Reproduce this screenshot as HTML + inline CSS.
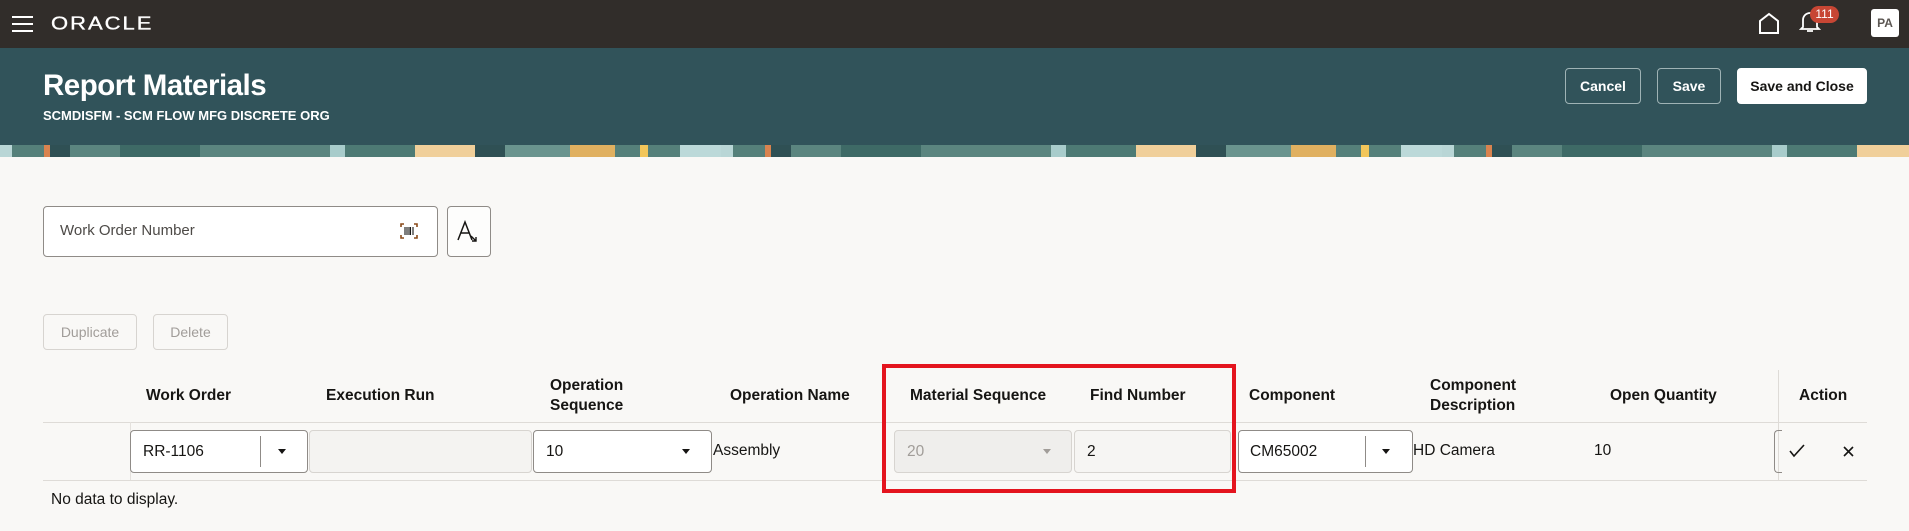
<!DOCTYPE html>
<html><head><meta charset="utf-8"><style>
*{margin:0;padding:0;box-sizing:border-box}
body{width:1909px;height:531px;overflow:hidden;background:#f9f8f6;font-family:"Liberation Sans",sans-serif;position:relative;color:#161513}
.a{position:absolute}
.top{left:0;top:0;width:1909px;height:48px;background:#312d2a}
.hdr{left:0;top:48px;width:1909px;height:97px;background:#31535a}
.band{left:0;top:145px;width:1909px;height:12px;background:repeating-linear-gradient(90deg,#b9d6d6 0 12px,#55807a 12px 44px,#d9834f 44px 50px,#2f5054 50px 70px,#5b857f 70px 120px,#3e6a66 120px 200px,#5b857f 200px 330px,#a8cccb 330px 345px,#4d7a74 345px 415px,#f0cf9a 415px 475px,#2f5054 475px 505px,#6a948e 505px 570px,#e0b060 570px 615px,#55807a 615px 640px,#f2c65a 640px 648px,#55807a 648px 680px,#bcd9d9 680px 721px)}
.btn{border:1px solid #9fb3b5;border-radius:4px;color:#fff;font-weight:bold;font-size:14px;display:flex;align-items:center;justify-content:center;height:36px;top:68px}
.th{font-weight:bold;font-size:15.5px;color:#161513;line-height:20px}
.fld{border:1px solid #8f8b87;border-radius:4px;background:#fff;height:43px;top:430px;font-size:15.5px;display:flex;align-items:center;padding-left:12px}
.arr{width:0;height:0;border-left:4.5px solid transparent;border-right:4.5px solid transparent;border-top:5px solid #161513}
.hl{height:1px;background:#dedbd7}
.t{font-size:15.5px}
</style></head><body>
<div class="a top"></div>
<div class="a" style="left:12px;top:16px;width:21px;height:2px;background:#fff;box-shadow:0 7px 0 #fff,0 14px 0 #fff"></div>
<div class="a" style="left:51px;top:11px;color:#fff;font-size:22px;letter-spacing:2px;-webkit-text-stroke:0.4px #fff;transform:scaleY(0.82);transform-origin:0 50%">ORACLE</div>
<svg class="a" style="left:1758px;top:12px" width="22" height="22" viewBox="0 0 22 22"><path d="M2 21V9L11 2L20 9V21Z" fill="none" stroke="#fff" stroke-width="2"/></svg>
<svg class="a" style="left:1799px;top:10px" width="22" height="24" viewBox="0 0 22 24"><path d="M4 17V10a7 7 0 0 1 14 0v7l2 2H2z M8 21h6" fill="none" stroke="#fff" stroke-width="1.8"/></svg>
<div class="a" style="left:1810px;top:6px;width:29px;height:17px;border-radius:9px;background:#c74634;color:#fff;font-size:12px;text-align:center;line-height:17px">111</div>
<div class="a" style="left:1871px;top:9px;width:28px;height:28px;border-radius:3px;background:#fff;color:#5b5652;font-size:12px;font-weight:bold;text-align:center;line-height:28px">PA</div>
<div class="a hdr"></div>
<div class="a" style="left:43px;top:69px;color:#fff;font-size:29.5px;font-weight:bold;letter-spacing:-0.5px">Report Materials</div>
<div class="a" style="left:43px;top:108px;color:#fff;font-size:13px;font-weight:bold">SCMDISFM - SCM FLOW MFG DISCRETE ORG</div>
<div class="a btn" style="left:1565px;width:76px">Cancel</div>
<div class="a btn" style="left:1657px;width:64px">Save</div>
<div class="a btn" style="left:1737px;width:130px;background:#fff;border-color:#fff;color:#161513">Save and Close</div>
<div class="a band"></div>

<div class="a" style="left:43px;top:206px;width:395px;height:51px;border:1px solid #8f8b87;border-radius:4px;background:#fff"></div>
<div class="a" style="left:60px;top:222px;font-size:15px;color:#4d4a47">Work Order Number</div>
<svg class="a" style="left:400px;top:223px" width="18" height="16" viewBox="0 0 18 16"><path d="M1 4V1h3M14 1h3v3M17 12v3h-3M4 15H1v-3" fill="none" stroke="#8a4a1a" stroke-width="1.6"/><path d="M5 4v8M7 4v8M9 4v8M10.5 4v8M13 4v8" stroke="#161513" stroke-width="1.1"/></svg>
<div class="a" style="left:447px;top:206px;width:44px;height:51px;border:1px solid #8f8b87;border-radius:4px;background:#fdfdfc"></div>
<svg class="a" style="left:456px;top:220px" width="26" height="24" viewBox="0 0 26 24"><path d="M2 20L9 2L16 20M5 13h8" fill="none" stroke="#161513" stroke-width="1.5"/><path d="M15 16l5 5M20 17v4h-4" fill="none" stroke="#161513" stroke-width="1.4"/></svg>

<div class="a" style="left:43px;top:314px;width:94px;height:36px;border:1px solid #d7d4d0;border-radius:4px;color:#a19d99;font-size:14px;display:flex;align-items:center;justify-content:center">Duplicate</div>
<div class="a" style="left:153px;top:314px;width:75px;height:36px;border:1px solid #d7d4d0;border-radius:4px;color:#a19d99;font-size:14px;display:flex;align-items:center;justify-content:center">Delete</div>

<div class="a th" style="left:146px;top:386px">Work Order</div>
<div class="a th" style="left:326px;top:386px">Execution Run</div>
<div class="a th" style="left:550px;top:376px">Operation<br>Sequence</div>
<div class="a th" style="left:730px;top:386px">Operation Name</div>
<div class="a th" style="left:910px;top:386px">Material Sequence</div>
<div class="a th" style="left:1090px;top:386px">Find Number</div>
<div class="a th" style="left:1249px;top:386px">Component</div>
<div class="a th" style="left:1430px;top:376px">Component<br>Description</div>
<div class="a th" style="left:1610px;top:386px">Open Quantity</div>
<div class="a th" style="left:1799px;top:386px">Action</div>

<div class="a hl" style="left:43px;top:422px;width:1824px"></div>
<div class="a hl" style="left:43px;top:480px;width:1824px"></div>
<div class="a" style="left:130px;top:422px;width:1px;height:58px;background:#e4e1dd"></div>
<div class="a" style="left:1778px;top:370px;width:1px;height:110px;background:#dedbd7"></div>

<div class="a fld" style="left:130px;width:178px">RR-1106</div>
<div class="a" style="left:260px;top:436px;width:1px;height:31px;background:#8f8b87"></div>
<div class="a arr" style="left:278px;top:449px"></div>
<div class="a fld" style="left:309px;width:223px;background:#f4f3f1;border-color:#d7d4d0"></div>
<div class="a fld" style="left:533px;width:179px">10</div>
<div class="a arr" style="left:682px;top:449px"></div>
<div class="a t" style="left:713px;top:442px">Assembly</div>
<div class="a fld" style="left:894px;width:178px;background:#efeeec;border-color:#d7d4d0;color:#a19d99">20</div>
<div class="a arr" style="left:1043px;top:449px;border-top-color:#a19d99"></div>
<div class="a fld" style="left:1074px;width:157px;background:#f6f5f3;border-color:#d7d4d0">2</div>
<div class="a fld" style="left:1238px;width:175px;padding-left:11px">CM65002</div>
<div class="a" style="left:1365px;top:436px;width:1px;height:31px;background:#8f8b87"></div>
<div class="a arr" style="left:1382px;top:449px"></div>
<div class="a t" style="left:1413px;top:442px">HD Camera</div>
<div class="a t" style="left:1594px;top:442px">10</div>
<div class="a" style="left:1774px;top:430px;width:8px;height:43px;border:1px solid #8f8b87;border-right:none;border-radius:4px 0 0 4px"></div>
<svg class="a" style="left:1789px;top:444px" width="16" height="14" viewBox="0 0 16 14"><path d="M1 7l4 5L15 1" fill="none" stroke="#161513" stroke-width="1.6"/></svg>
<svg class="a" style="left:1843px;top:446px" width="11" height="11" viewBox="0 0 11 11"><path d="M1 1l9 9M10 1l-9 9" stroke="#161513" stroke-width="1.6"/></svg>

<div class="a" style="left:882px;top:364px;width:354px;height:129px;border:4px solid #e4141e"></div>
<div class="a t" style="left:51px;top:491px">No data to display.</div>
</body></html>
